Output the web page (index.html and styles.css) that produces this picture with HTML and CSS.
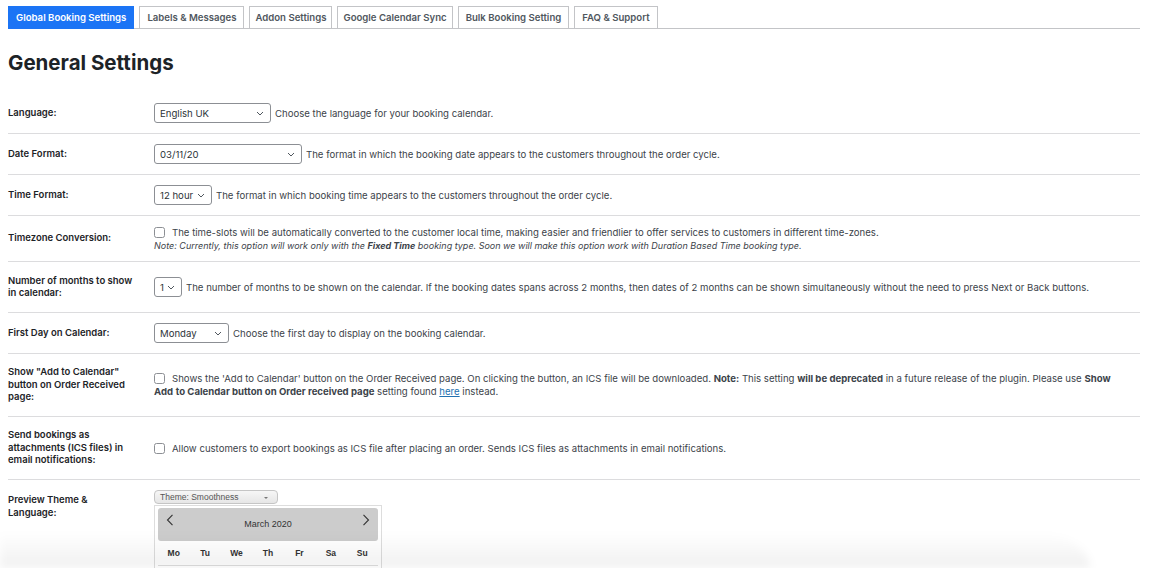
FILE: index.html
```html
<html>
<head>
  <link rel="stylesheet" href="styles.css">
</head>
<body>
  <div class="wrap">
    <div class="tabs">
      <a class="tab tab-active">Global Booking Settings</a>
      <a class="tab">Labels &amp; Messages</a>
      <a class="tab tab-tight">Addon Settings</a>
      <a class="tab tab-tight">Google Calendar Sync</a>
      <a class="tab">Bulk Booking Setting</a>
      <a class="tab">FAQ &amp; Support</a>
    </div>

    <h1 class="title">General Settings</h1>

    <div class="form">
      <div class="row">
        <div class="row_label">Language:</div>
        <div class="row_field">
          <span class="select select-lang">English UK</span>
          <span class="desc">Choose the language for your booking calendar.</span>
        </div>
      </div>
      <div class="row">
        <div class="row_label">Date Format:</div>
        <div class="row_field">
          <span class="select select-date">03/11/20</span>
          <span class="desc">The format in which the booking date appears to the customers throughout the order cycle.</span>
        </div>
      </div>
      <div class="row">
        <div class="row_label">Time Format:</div>
        <div class="row_field">
          <span class="select select-time">12 hour</span>
          <span class="desc">The format in which booking time appears to the customers throughout the order cycle.</span>
        </div>
      </div>
      <div class="row row-tz">
        <div class="row_label">Timezone Conversion:</div>
        <div class="row_field row_field-block">
          <div><span class="check"></span><span class="desc">The time-slots will be automatically converted to the customer local time, making easier and friendlier to offer services to customers in different time-zones.</span></div>
          <div class="note">Note: Currently, this option will work only with the <b>Fixed Time</b> booking type. Soon we will make this option work with Duration Based Time booking type.</div>
        </div>
      </div>
      <div class="row row-months">
        <div class="row_label">Number of months to show in calendar:</div>
        <div class="row_field">
          <span class="select select-num">1</span>
          <span class="desc">The number of months to be shown on the calendar. If the booking dates spans across 2 months, then dates of 2 months can be shown simultaneously without the need to press Next or Back buttons.</span>
        </div>
      </div>
      <div class="row">
        <div class="row_label">First Day on Calendar:</div>
        <div class="row_field">
          <span class="select select-day">Monday</span>
          <span class="desc">Choose the first day to display on the booking calendar.</span>
        </div>
      </div>
      <div class="row row-tall">
        <div class="row_label">Show "Add to Calendar" button on Order Received page:</div>
        <div class="row_field row_field-block row_field-wrap">
          <span class="check"></span>Shows the 'Add to Calendar' button on the Order Received page. On clicking the button, an ICS file will be downloaded. <b>Note:</b> This setting <b>will be deprecated</b> in a future release of the plugin. Please use <b>Show Add</b> <b>to Calendar button on Order received page</b> setting found <a class="link">here</a> instead.
        </div>
      </div>
      <div class="row row-tall">
        <div class="row_label">Send bookings as attachments (ICS files) in email notifications:</div>
        <div class="row_field">
          <span class="check"></span><span class="desc">Allow customers to export bookings as ICS file after placing an order. Sends ICS files as attachments in email notifications.</span>
        </div>
      </div>
      <div class="row row-last">
        <div class="row_label">Preview Theme &amp; Language:</div>
        <div class="row_field row_field-block">
          <div class="theme">Theme: Smoothness<span class="theme_arrow"></span></div>
          <div class="cal">
            <div class="cal_head">
              <svg class="cal_nav" width="8" height="12" viewBox="0 0 8 12"><path d="M6.5 0.8 L1.5 6 L6.5 11.2" fill="none" stroke="#333" stroke-width="1.1"/></svg>
              <span class="cal_month">March 2020</span>
              <svg class="cal_nav" width="8" height="12" viewBox="0 0 8 12"><path d="M1.5 0.8 L6.5 6 L1.5 11.2" fill="none" stroke="#333" stroke-width="1.1"/></svg>
            </div>
            <div class="cal_days">
              <span>Mo</span><span>Tu</span><span>We</span><span>Th</span><span>Fr</span><span>Sa</span><span>Su</span>
            </div>
            <div class="cal_grid"></div>
          </div>
        </div>
      </div>
    </div>
  </div>
  <div class="fade"></div>
</body>
</html>
```

FILE: styles.css
```css
body {
  margin: 0;
  padding: 6px 8px 0 8px;
  background: #fff;
  font-family: Inter, "Liberation Sans", sans-serif;
  color: #3c434a;
  overflow: hidden;
  height: 568px;
  box-sizing: border-box;
}
.wrap {
  width: 1132px;
}
.tabs {
  display: flex;
  gap: 5px;
  border-bottom: 1px solid #c3c4c7;
  height: 22px;
}
.tab {
  display: block;
  height: 21px;
  line-height: 21px;
  padding: 0 7px;
  border: 1px solid #c3c4c7;
  border-bottom: none;
  background: #fff;
  font-size: 9.6px;
  font-weight: 600;
  color: #50575e;
  white-space: nowrap;
}
.tab-tight {
  padding: 0 5px;
}
.tab-active {
  background: #1b74f5;
  border-color: #1b74f5;
  color: #fff;
  height: 22px;
}
.title {
  margin: 22px 0 0 0;
  font-size: 20.5px;
  font-weight: 700;
  color: #1d2327;
  height: 42px;
  line-height: 24px;
}
.row {
  display: flex;
  border-bottom: 1px solid #dcdcde;
  min-height: 40px;
  align-items: center;
}
.row_label {
  width: 146px;
  flex: none;
  padding-right: 14px;
  box-sizing: border-box;
  font-size: 9.5px;
  font-weight: 600;
  color: #1d2327;
  line-height: 12.5px;
}
.row_field {
  display: flex;
  align-items: center;
  font-size: 9.6px;
  line-height: 13px;
}
.row_field-block {
  display: block;
}
.row_field-wrap {
  padding-right: 10px;
}
.row-tz {
  min-height: 45px;
}
.row-months {
  min-height: 50px;
}
.row-tall {
  min-height: 62px;
}
.row-last {
  border-bottom: none;
  align-items: flex-start;
  padding-top: 10px;
}
.row-last .row_label {
  padding-top: 4px;
  padding-right: 40px;
}
.select {
  display: inline-flex;
  align-items: center;
  box-sizing: border-box;
  height: 20px;
  padding: 0 18px 0 5px;
  border: 1px solid #8c8f94;
  border-radius: 3px;
  font-size: 9.6px;
  color: #2c3338;
  margin-right: 4px;
  flex: none;
  white-space: nowrap;
  background: #fff url("data:image/svg+xml;utf8,<svg xmlns='http://www.w3.org/2000/svg' width='8' height='5' viewBox='0 0 8 5'><path d='M1 1 L4 4 L7 1' fill='none' stroke='%2350575e' stroke-width='1'/></svg>") no-repeat right 6px center;
}
.select-lang {
  width: 117px;
}
.select-date {
  width: 148px;
}
.select-time {
  width: 58px;
}
.select-num {
  width: 28px;
}
.select-day {
  width: 75px;
}
.check {
  display: inline-block;
  width: 9px;
  height: 9px;
  border: 1px solid #8c8f94;
  border-radius: 2.5px;
  vertical-align: -2px;
  margin-right: 7px;
}
.note {
  font-style: italic;
  font-size: 9px;
}
.link {
  color: #2271b1;
  text-decoration: underline;
}
.theme {
  position: relative;
  width: 124px;
  height: 14px;
  box-sizing: border-box;
  border: 1px solid #c5c5c5;
  border-radius: 4px;
  background: linear-gradient(#f6f6f6, #e6e6e6);
  font-family: "Liberation Sans", sans-serif;
  font-size: 8.5px;
  line-height: 12px;
  padding-left: 5px;
  color: #555;
}
.theme_arrow {
  position: absolute;
  right: 9px;
  top: 6px;
  border-left: 2px solid transparent;
  border-right: 2px solid transparent;
  border-top: 2px solid #777;
}
.cal {
  width: 228px;
  box-sizing: border-box;
  border: 1px solid #ddd;
  border-bottom: none;
  padding: 2px 3px 0 3px;
  margin-top: 1px;
  font-family: "Liberation Sans", sans-serif;
}
.cal_head {
  display: flex;
  justify-content: space-between;
  align-items: flex-start;
  height: 33px;
  background: #cccccc;
  border-radius: 3px;
  padding: 6px 8px 0 8px;
  box-sizing: border-box;
}
.cal_month {
  font-size: 9px;
  color: #333;
  padding-top: 4px;
}
.cal_days {
  display: grid;
  grid-template-columns: repeat(7, 1fr);
  text-align: center;
  padding-top: 6px;
  height: 18px;
  font-size: 8.5px;
  font-weight: 700;
  color: #333;
  border-bottom: 1px solid #ddd;
}
.cal_grid {
  height: 10px;
}
.fade {
  position: absolute;
  left: 0;
  bottom: 0;
  width: 1090px;
  height: 36px;
  background: linear-gradient(rgba(0, 0, 0, 0), rgba(0, 0, 0, 0.06));
  border-top-right-radius: 60px 36px;
  filter: blur(4px);
}
```
